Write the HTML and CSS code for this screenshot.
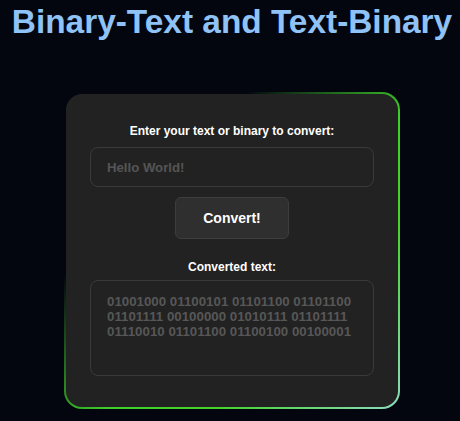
FILE: index.html
```html
<!DOCTYPE html>
<html>
<head>
<meta charset="utf-8">
<link rel="stylesheet" href="styles.css">
</head>
<body>
<h1 class="title">Binary-Text and Text-Binary</h1>
<div class="frame">
  <div class="card">
    <label class="label" for="src">Enter your text or binary to convert:</label>
    <input id="src" class="field" type="text" placeholder="Hello World!">
    <button class="btn" type="button">Convert!</button>
    <div class="label label-out">Converted text:</div>
    <div class="output">01001000 01100101 01101100 01101100 01101111 00100000 01010111 01101111 01110010 01101100 01100100 00100001</div>
  </div>
</div>
</body>
</html>
```
FILE: styles.css
```css
html, body {
  margin: 0;
  padding: 0;
  background: #03060f;
  font-family: "Liberation Sans", Arial, sans-serif;
}
.title {
  margin: 0;
  padding: 3px 0 0 4px;
  text-align: center;
  font-size: 33.4px;
  line-height: 38px;
  font-weight: bold;
  color: #8fc2f7;
}
.frame {
  width: 336px;
  margin: 51px 0 0 calc(50% - 166px);
  padding: 2px;
  box-sizing: border-box;
  border-radius: 18px;
  background: linear-gradient(135deg, rgba(40,160,30,0) 0%, rgba(40,160,30,0) 28%, #3fcf2a 55%, #45d42c 72%, #8edbbf 100%);
}
.card {
  background: #222222;
  border-radius: 16px;
  padding: 30px 24px 31px;
  display: flex;
  flex-direction: column;
  align-items: center;
}
.label {
  display: block;
  color: #ffffff;
  font-size: 12px;
  font-weight: bold;
  line-height: 15px;
  margin-bottom: 8px;
}
.label-out {
  margin-top: 21px;
  margin-bottom: 5px;
}
.field {
  width: 284px;
  height: 40px;
  box-sizing: border-box;
  background: #222222;
  border: 1px solid #3a3a3a;
  border-radius: 8px;
  padding: 0 16px;
  font-family: inherit;
  font-size: 13.2px;
  font-weight: bold;
  color: #cccccc;
  outline: none;
}
.field::placeholder {
  color: #555555;
}
.btn {
  margin-top: 10px;
  width: 114px;
  height: 42px;
  background: #2f2f2f;
  border: 1px solid #3d3d3d;
  border-radius: 6px;
  color: #ffffff;
  font-family: inherit;
  font-size: 14px;
  font-weight: bold;
}
.output {
  width: 284px;
  height: 96px;
  box-sizing: border-box;
  border: 1px solid #3a3a3a;
  border-radius: 8px;
  padding: 13px 16px;
  color: #575757;
  font-size: 13.3px;
  font-weight: bold;
  line-height: 15px;
}
```
